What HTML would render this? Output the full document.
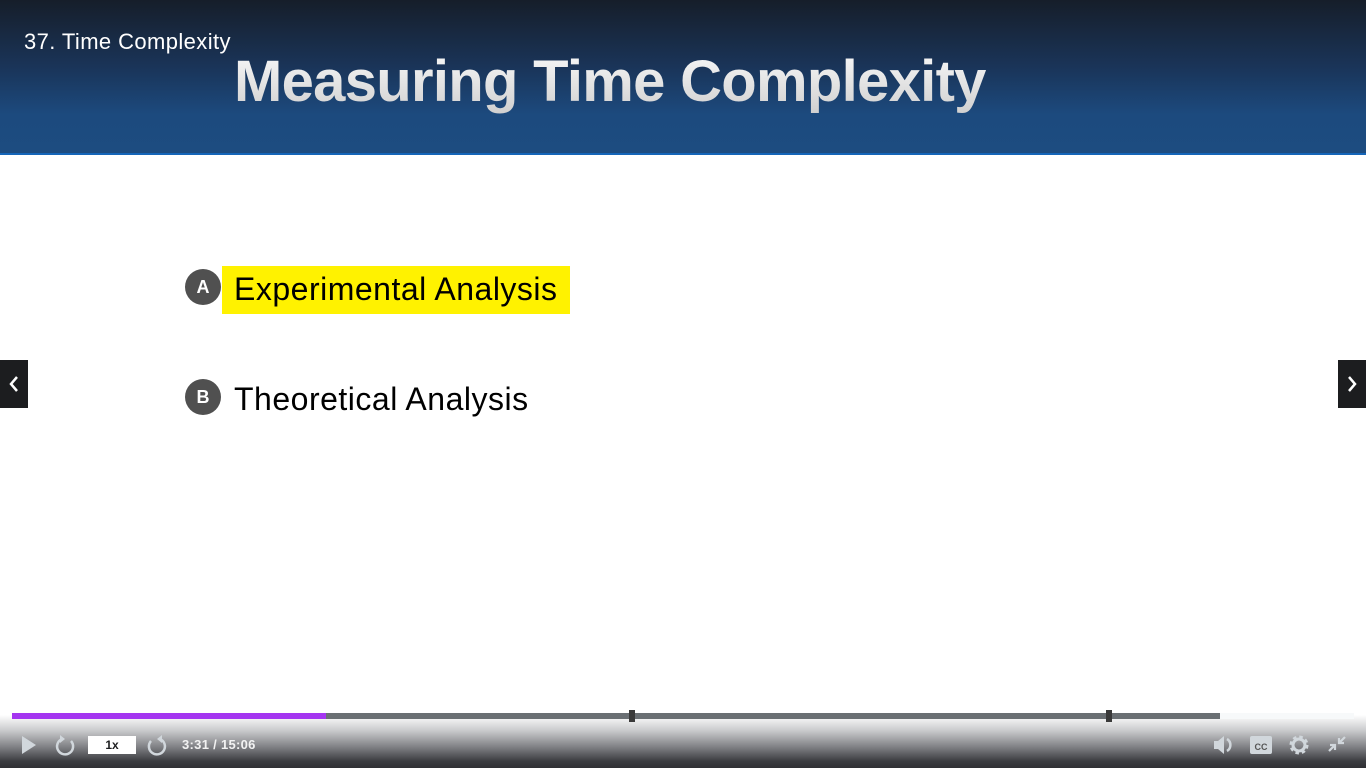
<!DOCTYPE html>
<html><head><meta charset="utf-8"><style>
*{margin:0;padding:0;box-sizing:border-box}
body{width:1366px;height:768px;overflow:hidden;background:#fff;font-family:"Liberation Sans",sans-serif;position:relative}
.hdr{position:absolute;left:0;top:0;width:1366px;height:153px;background:linear-gradient(#161e2a 0%,#1a355a 45%,#1c4a7e 75%,#1d4c80 100%)}
.hline{position:absolute;left:0;top:153px;width:1366px;height:2px;background:#1565b8}
.crumb{position:absolute;left:24px;top:29px;color:#fff;font-size:22px;letter-spacing:0.4px}
.title{position:absolute;left:234px;top:48px;font-size:58px;font-weight:bold;letter-spacing:-0.7px;white-space:nowrap;color:#e4e4e4;background:linear-gradient(#fafafa,#cfcfcf);-webkit-background-clip:text;background-clip:text;-webkit-text-fill-color:transparent}
.circ{position:absolute;width:36px;height:36px;border-radius:50%;background:#505050;color:#fff;font-weight:bold;font-size:18px;text-align:center;line-height:36px}
.hl{position:absolute;left:222px;top:266px;width:348px;height:48px;background:#fff200}
.item{position:absolute;left:234px;font-size:32px;color:#000;letter-spacing:0.5px;white-space:nowrap}
.nav{position:absolute;top:360px;width:28px;height:48px;background:#1c1d1f;color:#fff}
.ctrl{position:absolute;left:0;top:700px;width:1366px;height:68px;background:linear-gradient(#fff 0%,#fff 22%,#c9cacc 45%,#7d7e82 70%,#3b3c40 90%,#2f3034 100%)}
.bar{position:absolute;top:713px;height:6px}
</style></head><body>
<div class="hdr"></div><div class="hline"></div>
<div class="crumb">37. Time Complexity</div>
<div class="title">Measuring Time Complexity</div>
<div class="circ" style="left:185px;top:269px">A</div>
<div class="hl"></div>
<div class="item" style="top:271px">Experimental Analysis</div>
<div class="circ" style="left:185px;top:379px">B</div>
<div class="item" style="top:381px">Theoretical Analysis</div>
<div class="nav" style="left:0"><svg width="28" height="48"><path d="M17 17l-6 7 6 7" stroke="#fff" stroke-width="2.5" fill="none"/></svg></div>
<div class="nav" style="left:1338px"><svg width="28" height="48"><path d="M11 17l6 7-6 7" stroke="#fff" stroke-width="2.5" fill="none"/></svg></div>
<div class="ctrl"></div>
<div class="bar" style="left:12px;width:1208px;background:#6a6f73"></div>
<div class="bar" style="left:1220px;width:134px;background:#f7f9fa"></div>
<div class="bar" style="left:12px;width:314px;background:#a435f0"></div>
<div style="position:absolute;left:629px;top:710px;width:6px;height:12px;background:#3a3a3a"></div>
<div style="position:absolute;left:1106px;top:710px;width:6px;height:12px;background:#3a3a3a"></div>
<svg style="position:absolute;left:0;top:730px" width="1366" height="32">
<path d="M22 6v18l14-9z" fill="#d1d7dc"/>
<path d="M62 9a8 8 0 1 0 9 2" stroke="#d1d7dc" stroke-width="2.5" fill="none"/><path d="M60 5l5 4-5 4z" fill="#d1d7dc"/>
<path d="M160 9a8 8 0 1 1 -9 2" stroke="#d1d7dc" stroke-width="2.5" fill="none"/><path d="M162 5l-5 4 5 4z" fill="#d1d7dc"/>
<path d="M1214 11h4l6-5v18l-6-5h-4z" fill="#d1d7dc"/><path d="M1227 9a7 7 0 0 1 0 12" stroke="#d1d7dc" stroke-width="2.5" fill="none"/>
<rect x="1250" y="6" width="22" height="18" rx="2" fill="#d1d7dc"/>
<text x="1261" y="20" font-size="9" font-weight="bold" fill="#555" text-anchor="middle" font-family="Liberation Sans">CC</text>
<circle cx="1299" cy="15" r="7" fill="none" stroke="#d1d7dc" stroke-width="5" stroke-dasharray="3 2.5"/><circle cx="1299" cy="15" r="6" fill="none" stroke="#d1d7dc" stroke-width="3"/>
<path d="M1329 21l6-6m-5 0h5v5M1345 7l-6 6m5 0h-5v-5" stroke="#d1d7dc" stroke-width="2.2" fill="none"/>
</svg>
<div style="position:absolute;left:88px;top:736px;width:48px;height:18px;background:#fff;text-align:center;font-size:12px;font-weight:bold;line-height:18px;color:#1c1d1f">1x</div>
<div style="position:absolute;left:182px;top:737px;font-size:13px;font-weight:bold;color:#f2f2f2;letter-spacing:0.3px">3:31 / 15:06</div>
</body></html>
